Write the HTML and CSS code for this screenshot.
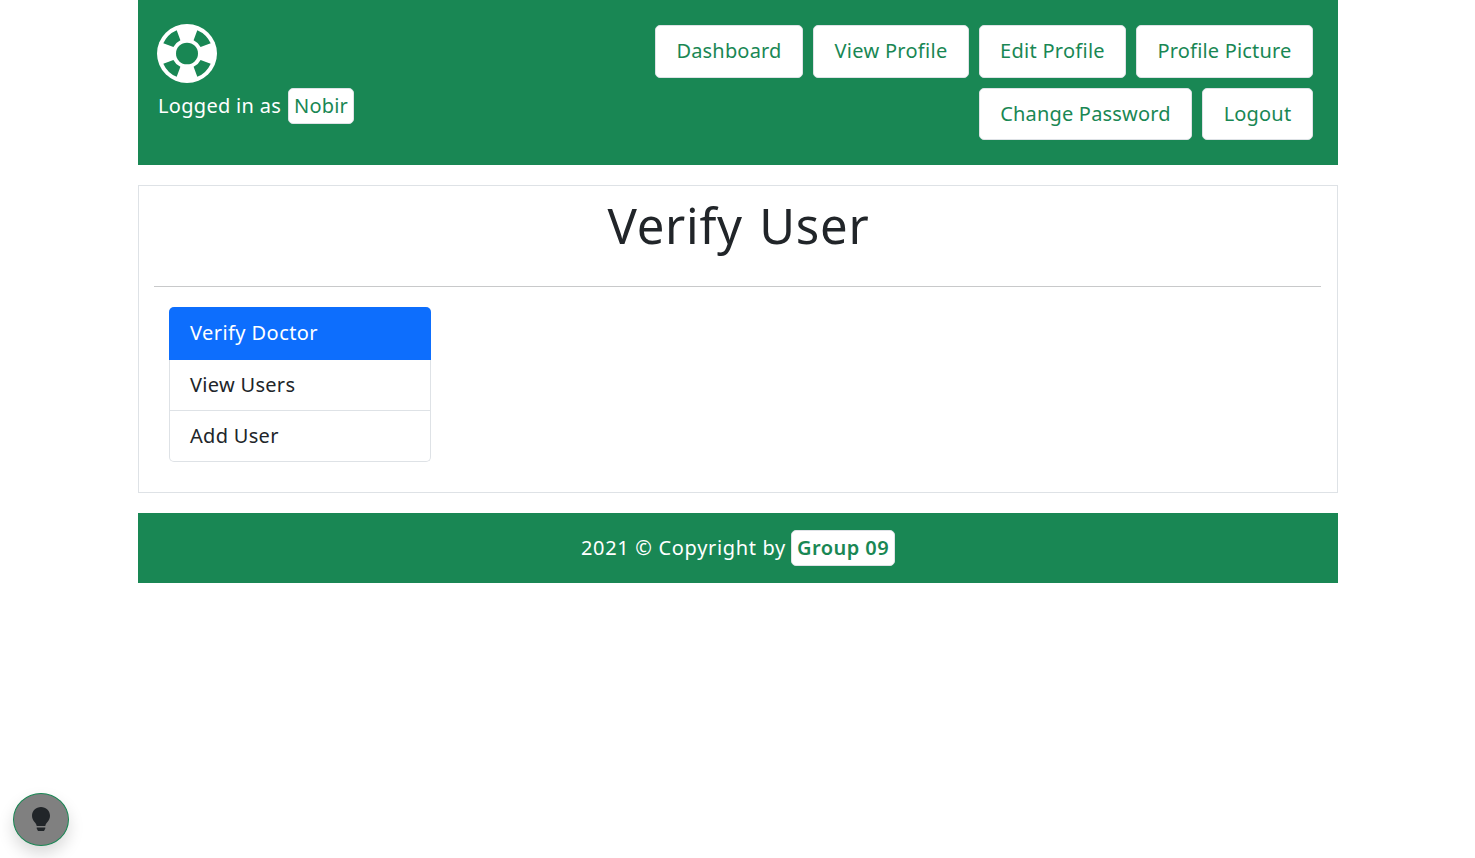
FILE: index.html
```html
<!DOCTYPE html>
<html lang="en">
<head>
<meta charset="utf-8">
<title>Verify User</title>
<link rel="stylesheet" href="styles.css">
</head>
<body>
<div class="container">
  <header class="header">
    <div class="brand">
      <svg class="logo" viewBox="-30 -30 60 60" preserveAspectRatio="none">
        <circle r="30" fill="#fff"/>
        <circle r="11" fill="#198754"/>
        <g fill="#198754">
          <path id="gap" d="M-23.700-10.300A25.900 25.900 0 0 1-10.300-23.700L-6.600-13.600A15.100 15.100 0 0 0-13.600-6.600Z"/>
          <use href="#gap" transform="rotate(90)"/>
          <use href="#gap" transform="rotate(180)"/>
          <use href="#gap" transform="rotate(270)"/>
        </g>
      </svg>
      <div class="login"><span class="login-text">Logged in as</span><a class="thumb user">Nobir</a></div>
    </div>
    <nav class="nav">
      <div class="nav-row first">
        <a class="btn dashboard">Dashboard</a>
        <a class="btn view">View Profile</a>
        <a class="btn edit">Edit Profile</a>
        <a class="btn picture">Profile Picture</a>
      </div>
      <div class="nav-row">
        <a class="btn password">Change Password</a>
        <a class="btn logout">Logout</a>
      </div>
    </nav>
  </header>
  <main class="panel">
    <h1 class="title">Verify User</h1>
    <div class="menu">
      <a class="item active">Verify Doctor</a>
      <a class="item">View Users</a>
      <a class="item">Add User</a>
    </div>
  </main>
  <footer class="footer"><span class="copy">2021 © Copyright by</span><a class="thumb group">Group 09</a></footer>
</div>
<button class="theme" aria-label="Theme">
  <svg class="bulb" viewBox="0 0 18 24" fill="#212529"><path d="M9 0C4 0 0 3.900 0 8.800c0 2.500 1 4.300 2.300 6 1.300 1.500 2.100 2.600 2.400 4.200h8.600c.3-1.600 1.100-2.700 2.400-4.200 1.300-1.700 2.300-3.500 2.300-6C18 3.900 14 0 9 0ZM4.700 20.400h8.600v1.100L12 24H6l-1.300-2.500Z"/></svg>
</button>
</body>
</html>
```
FILE: styles.css
```css
* { box-sizing: border-box; }
body { margin: 0; background: #fff; color: #212529; font: 20px/30px "Noto Sans", sans-serif; letter-spacing: .4px; }
.container { width: 1200px; margin: 0 auto; position: relative; left: .5px; }
.header { height: 165px; background: #198754; display: flex; justify-content: space-between; padding: 24px 25px 0 19px; }
.brand { color: #fff; }
.logo { display: block; width: 60px; height: 59px; }
.login { display: flex; margin-top: 5px; white-space: nowrap; }
.login-text { width: 131px; padding-left: 1px; line-height: 36px; letter-spacing: .3px; }
.thumb { height: 36px; background: #fff; color: #198754; border: 1px solid #dee2e6; border-radius: 5px; text-align: center; white-space: nowrap; line-height: 34px; }
.user { width: 66px; letter-spacing: .2px; }
.nav { padding-top: 1px; }
.nav-row { display: flex; justify-content: flex-end; gap: 10px; height: 52px; }
.first { height: 53px; margin-bottom: 10px; }
.btn { background: #fff; color: #198754; border: 1px solid #dee2e6; border-radius: 5px; padding-top: 10px; text-align: center; white-space: nowrap; letter-spacing: .18px; }
.dashboard { width: 148px; }
.view { width: 156px; letter-spacing: .3px; }
.edit { width: 147px; letter-spacing: .27px; }
.picture { width: 177px; }
.password { width: 213px; }
.logout { width: 111px; }
.panel { height: 308px; margin-top: 20px; border: 1px solid #dee2e6; padding: 10px 16px 0 15px; }
.title { margin: 0 0 20px; height: 91px; padding-left: 2px; border-bottom: 1px solid #c8c9ca; text-align: center; font-size: 49px; font-weight: 400; line-height: 59px; letter-spacing: .75px; word-spacing: 3px; }
.menu { width: 262px; margin-left: 15px; border: 1px solid #dee2e6; border-top: 0; border-radius: 5px; height: 155px; }
.item { display: block; height: 51px; padding: 10px 20px; border-bottom: 1px solid #dee2e6; color: #212529; letter-spacing: .3px; }
.item:last-child { border-bottom: 0; }
.active { background: #0d6efd; color: #fff; border: 0; border-radius: 5px 5px 0 0; height: 53px; margin: 0 -1px; padding: 11px 21px; letter-spacing: .43px; }
.footer { margin-top: 20px; height: 70px; padding-top: 17px; background: #198754; color: #fff; display: flex; justify-content: center; white-space: nowrap; }
.copy { width: 211px; margin-left: -1px; padding-left: 1px; line-height: 36px; letter-spacing: .67px; }
.group { width: 104px; font-weight: 600; letter-spacing: .45px; }
.theme { position: fixed; left: 13px; top: 793px; width: 56px; height: 53px; padding: 0; border: 1px solid #198754; border-radius: 50%; background: #808080; box-shadow: 0 8px 16px rgba(0,0,0,.15); display: flex; align-items: center; justify-content: center; }
.bulb { width: 18px; height: 24px; margin-bottom: 2px; }
```
